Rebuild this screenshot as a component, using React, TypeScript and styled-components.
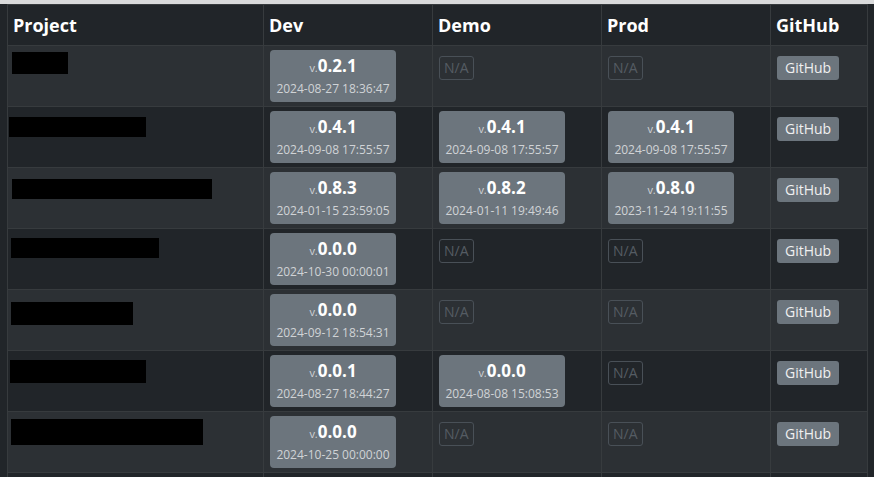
import React from "react";
import styled, { createGlobalStyle } from "styled-components";

const Global = createGlobalStyle`
  html, body { margin: 0; background: #212529; overflow: hidden; }
  body { font-family: "Open Sans", "Liberation Sans", sans-serif; color: #fff; }
  th, td { box-sizing: border-box; }
`;

const TopStrip = styled.div`height: 4px; background: #d9dadb;`;
const Wrap = styled.div`padding: 0 7px;`;
const Table = styled.table`
  border-collapse: collapse;
  width: 860px;
  table-layout: fixed;
`;
const Th = styled.th<{ w: number }>`
  width: ${p => p.w}px;
  text-align: left;
  font-size: 18px;
  font-weight: 700;
  height: 41px;
  padding: 0 5px;
  border: 1px solid #373b3e;
  background: #212529;
`;
const Tr = styled.tr<{ odd: boolean }>`
  background: ${p => (p.odd ? "#2c3034" : "#212529")};
`;
const Td = styled.td`
  height: 60px;
  padding: 4px 6px;
  vertical-align: top;
  border: 1px solid #373b3e;
`;
const Redact = styled.div<{ w: number; h: number; ml: number; mt: number }>`
  width: ${p => p.w}px;
  height: ${p => p.h}px;
  margin-left: ${p => p.ml}px;
  margin-top: ${p => p.mt}px;
  background: #000;
`;
const Badge = styled.div`
  width: 126px;
  height: 52px;
  background: #6c757d;
  border-radius: 4px;
  display: flex;
  flex-direction: column;
  align-items: center;
  justify-content: center;
  gap: 3px;
`;
const Ver = styled.div`
  font-size: 17px;
  font-weight: 700;
  line-height: 20px;
  small { font-size: 11px; font-weight: 400; color: #d0d3d6; }
`;
const Date = styled.div`font-size: 12px; color: #d0d3d6; line-height: 16px;`;
const NA = styled.div`
  display: inline-block;
  margin-top: 6px;
  padding: 0 4px;
  height: 22px;
  line-height: 22px;
  border: 1px solid #495057;
  border-radius: 3px;
  color: #555c63;
  font-size: 14px;
`;
const Btn = styled.div`
  display: inline-block;
  margin-top: 6px;
  padding: 0 8px;
  height: 24px;
  line-height: 24px;
  background: #6c757d;
  border-radius: 3px;
  font-size: 14px;
  color: #f0f0f0;
`;

type V = [string, string] | null;
const rows: { r: [number, number, number, number]; dev: V; demo: V; prod: V }[] = [
  { r: [56, 22, -2, 2], dev: ["0.2.1", "2024-08-27 18:36:47"], demo: null, prod: null },
  { r: [137, 20, -5, 6], dev: ["0.4.1", "2024-09-08 17:55:57"], demo: ["0.4.1", "2024-09-08 17:55:57"], prod: ["0.4.1", "2024-09-08 17:55:57"] },
  { r: [200, 20, -2, 7], dev: ["0.8.3", "2024-01-15 23:59:05"], demo: ["0.8.2", "2024-01-11 19:49:46"], prod: ["0.8.0", "2023-11-24 19:11:55"] },
  { r: [148, 20, -3, 5], dev: ["0.0.0", "2024-10-30 00:00:01"], demo: null, prod: null },
  { r: [122, 23, -3, 8], dev: ["0.0.0", "2024-09-12 18:54:31"], demo: null, prod: null },
  { r: [136, 23, -4, 5], dev: ["0.0.1", "2024-08-27 18:44:27"], demo: ["0.0.0", "2024-08-08 15:08:53"], prod: null },
  { r: [192, 26, -3, 3], dev: ["0.0.0", "2024-10-25 00:00:00"], demo: null, prod: null },
  { r: [0, 0, 0, 0], dev: ["0.0.0", ""], demo: null, prod: null },
];

const Cell = ({ v }: { v: V }) => (
  <Td>
    {v ? (
      <Badge>
        <Ver><small>v.</small>{v[0]}</Ver>
        <Date>{v[1]}</Date>
      </Badge>
    ) : (
      <NA>N/A</NA>
    )}
  </Td>
);

export default function App() {
  return (
    <>
      <Global />
      <TopStrip />
      <Wrap>
        <Table>
          <thead>
            <tr>
              <Th w={256}>Project</Th>
              <Th w={169}>Dev</Th>
              <Th w={169}>Demo</Th>
              <Th w={169}>Prod</Th>
              <Th w={97}>GitHub</Th>
            </tr>
          </thead>
          <tbody>
            {rows.map((row, i) => (
              <Tr key={i} odd={i % 2 === 0}>
                <Td>
                  {row.r[0] > 0 && <Redact w={row.r[0]} h={row.r[1]} ml={row.r[2]} mt={row.r[3]} />}
                </Td>
                <Cell v={row.dev} />
                <Cell v={row.demo} />
                <Cell v={row.prod} />
                <Td><Btn>GitHub</Btn></Td>
              </Tr>
            ))}
          </tbody>
        </Table>
      </Wrap>
    </>
  );
}
